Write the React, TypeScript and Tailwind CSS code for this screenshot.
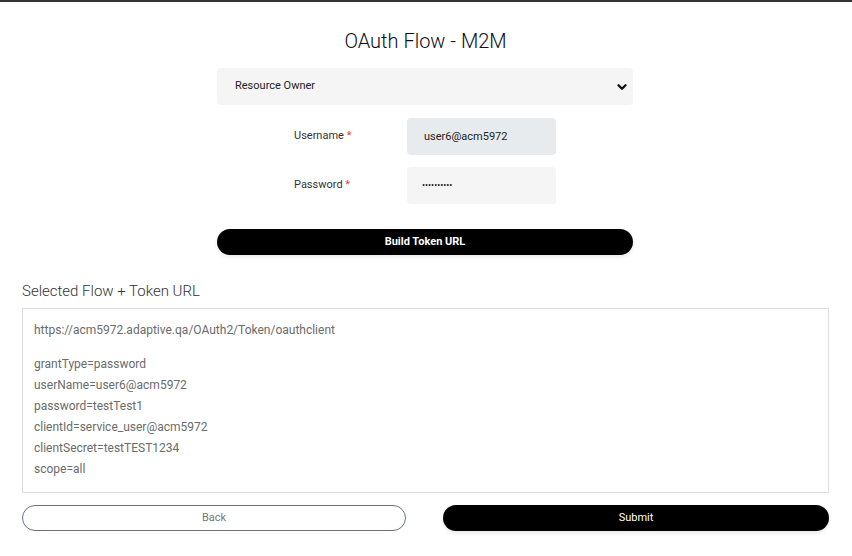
import React from 'react';

const lines = [
  'grantType=password',
  'userName=user6@acm5972',
  'password=testTest1',
  'clientId=service_user@acm5972',
  'clientSecret=testTEST1234',
  'scope=all',
];

const App: React.FC = () => {
  return (
    <div className="min-h-[556px] bg-white border-t-2 border-[#333] font-['Roboto',sans-serif] pl-[22px] pr-[23px]">
      <h1 className="mt-[25px] text-center text-[20px] leading-[28px] font-light text-[#0d0d1a]">
        OAuth Flow - M2M
      </h1>

      <div className="ml-[195px] w-[416px] mt-[13px]">
        <div className="h-[37px] rounded-[4px] bg-[#f5f5f5] flex items-center justify-between pl-[18px] pr-[4px]">
          <span className="text-[11px] text-[#222]">Resource Owner</span>
          <svg width="14" height="14" viewBox="0 0 24 24" fill="none" stroke="#111" strokeWidth="4" strokeLinecap="round" strokeLinejoin="round">
            <path d="M6 9l6 6 6-6" />
          </svg>
        </div>

        <div className="mt-[13px] flex flex-col gap-[12px]">
          <div className="flex items-center">
            <div className="w-[190px] pl-[77px] text-[11px] text-[#333]">
              Username <span className="text-[#e53e3e]">*</span>
            </div>
            <div className="w-[149px] h-[37px] rounded-[4px] bg-[#e8ebee] flex items-center pl-[17px] pt-[2px] text-[11px] text-[#222]">
              user6@acm5972
            </div>
          </div>
          <div className="flex items-center">
            <div className="w-[190px] pl-[77px] text-[11px] text-[#333]">
              Password <span className="text-[#e53e3e]">*</span>
            </div>
            <div className="w-[149px] h-[37px] rounded-[4px] bg-[#f5f5f5] flex items-center pl-[15px] text-[9px] text-[#111]">
              ••••••••••
            </div>
          </div>
        </div>

        <button className="mt-[25px] w-full h-[26px] rounded-full bg-black text-white text-[11px] font-bold shadow-[0_2px_4px_rgba(0,0,0,0.08)]">
          Build Token URL
        </button>
      </div>

      <h2 className="mt-[26px] text-[15px] leading-[20px] font-light text-[#333]">
        Selected Flow + Token URL
      </h2>

      <div className="mt-[7px] h-[185px] border border-[#dddddd] pl-[11px] pt-[11px] text-[12px] leading-[21px] text-[#6b6b6b]">
        <div className="mb-[13px]">https://acm5972.adaptive.qa/OAuth2/Token/oauthclient</div>
        {lines.map((l) => (
          <div key={l}>{l}</div>
        ))}
      </div>

      <div className="mt-[12px] flex gap-[37px]">
        <button className="w-[384px] h-[26px] rounded-full border border-[#6b7280] bg-white text-[11px] text-[#777]">
          Back
        </button>
        <button className="flex-1 h-[26px] rounded-full bg-black text-white text-[11px] shadow-[0_2px_4px_rgba(0,0,0,0.1)]">
          Submit
        </button>
      </div>
    </div>
  );
};

export default App;
